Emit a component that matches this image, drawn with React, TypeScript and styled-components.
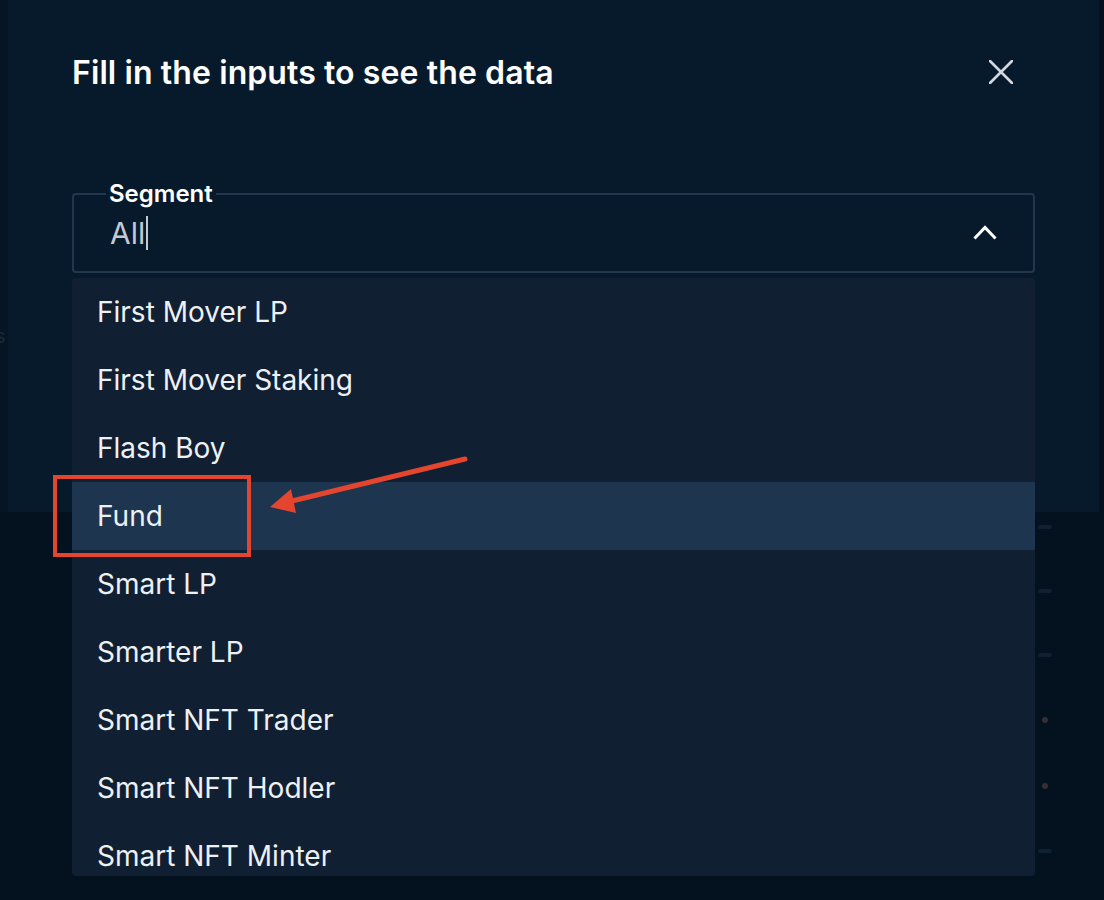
import React from "react";
import styled, { createGlobalStyle } from "styled-components";

const GlobalStyle = createGlobalStyle`
  html, body { margin: 0; padding: 0; background: #04121f; }
  body { font-family: Inter, "Noto Sans", "Liberation Sans", sans-serif; -webkit-font-smoothing: antialiased; }
  * { box-sizing: border-box; }
`;

const Page = styled.div`
  position: relative;
  width: 1104px;
  height: 900px;
  overflow: hidden;
  background: #04121f;
`;

const TopRow = styled.div`
  display: flex;
  height: 512px;
`;

const Gutter = styled.div`
  width: 8px;
  flex: none;
  overflow: hidden;
  background: #051524;
  padding-top: 324px;
`;

const GhostText = styled.span`
  display: block;
  margin-left: -5px;
  font-size: 20px;
  color: #1c2a39;
`;

const Dialog = styled.section`
  position: relative;
  width: 1091px;
  flex: none;
  background: #071a2c;
  padding: 50px 64px 0 64px;
`;

const Header = styled.header`
  display: flex;
  align-items: center;
  justify-content: space-between;
  height: 44px;
`;

const Title = styled.h2`
  margin: 0;
  font-size: 32px;
  font-weight: 600;
  color: #ffffff;
  letter-spacing: 0.1px;
`;

const CloseButton = styled.button`
  width: 44px;
  height: 44px;
  margin-right: 12px;
  display: flex;
  align-items: center;
  justify-content: center;
  border: none;
  background: transparent;
  padding: 0;
  cursor: pointer;
`;

const Field = styled.div`
  position: relative;
  margin-top: 87px;
`;

const Fieldset = styled.fieldset`
  margin: 0;
  border: 2px solid #23364b;
  border-radius: 4px;
  padding: 8px 36px 20px 36px;
  min-width: 0;
`;

const Legend = styled.legend`
  margin-left: -4px;
  padding: 0 3px;
  font-size: 24px;
  line-height: 26px;
  font-weight: 600;
  color: #ffffff;
`;

const InputRow = styled.div`
  display: flex;
  align-items: center;
  justify-content: space-between;
  height: 36px;
`;

const Value = styled.span`
  display: flex;
  align-items: center;
  font-size: 30px;
  line-height: 36px;
  color: #c3cad3;
`;

const Caret = styled.span`
  display: inline-block;
  width: 2px;
  height: 34px;
  margin-left: 1px;
  background: #c3cad3;
`;

const Menu = styled.ul`
  position: absolute;
  top: calc(100% + 5px);
  left: 0;
  right: 0;
  height: 598px;
  margin: 0;
  padding: 0;
  list-style: none;
  overflow: hidden;
  background: #111f33;
  border-radius: 4px;
  z-index: 2;
`;

const Option = styled.li<{ $active?: boolean }>`
  display: flex;
  align-items: center;
  height: 68px;
  padding-left: 25px;
  font-size: 28px;
  color: #eef1f4;
  background: ${(p) => (p.$active ? "#1e3550" : "transparent")};
`;

const Lower = styled.div`
  display: flex;
  justify-content: flex-end;
  padding: 13px 52px 0 0;
`;

const MarkColumn = styled.div`
  display: flex;
  flex-direction: column;
  align-items: center;
  gap: 60px;
`;

const Mark = styled.span<{ $dot?: boolean }>`
  display: block;
  width: ${(p) => (p.$dot ? "6px" : "14px")};
  height: ${(p) => (p.$dot ? "6px" : "4px")};
  border-radius: 3px;
  background: ${(p) => (p.$dot ? "#352f33" : "#102133")};
`;

const Annotation = styled.svg`
  position: absolute;
  left: 0;
  top: 0;
  pointer-events: none;
  z-index: 5;
`;

const options = [
  "First Mover LP",
  "First Mover Staking",
  "Flash Boy",
  "Fund",
  "Smart LP",
  "Smarter LP",
  "Smart NFT Trader",
  "Smart NFT Hodler",
  "Smart NFT Minter",
];

export default function App() {
  return (
    <>
      <GlobalStyle />
      <Page>
        <TopRow>
          <Gutter>
            <GhostText>s</GhostText>
          </Gutter>
          <Dialog>
            <Header>
              <Title>Fill in the inputs to see the data</Title>
              <CloseButton aria-label="Close">
                <svg width="24" height="24" viewBox="0 0 24 24">
                  <path d="M1 1 L23 23 M23 1 L1 23" stroke="#d3d8de" strokeWidth="2.6" strokeLinecap="round" />
                </svg>
              </CloseButton>
            </Header>
            <Field>
              <Fieldset>
                <Legend>Segment</Legend>
                <InputRow>
                  <Value>
                    All
                    <Caret />
                  </Value>
                  <svg width="24" height="16" viewBox="0 0 24 16">
                    <path d="M1.5 13.5 L12 2.5 L22.5 13.5" fill="none" stroke="#ffffff" strokeWidth="3" />
                  </svg>
                </InputRow>
              </Fieldset>
              <Menu>
                {options.map((o) => (
                  <Option key={o} $active={o === "Fund"}>
                    {o}
                  </Option>
                ))}
              </Menu>
            </Field>
          </Dialog>
        </TopRow>
        <Lower>
          <MarkColumn>
            <Mark />
            <Mark />
            <Mark />
            <Mark $dot />
            <Mark $dot />
            <Mark />
          </MarkColumn>
        </Lower>
        <Annotation width="1104" height="900" viewBox="0 0 1104 900">
          <rect x="55" y="477" width="194" height="78" fill="none" stroke="#e4452e" strokeWidth="4" />
          <line x1="465" y1="459" x2="292" y2="501" stroke="#e4452e" strokeWidth="5" strokeLinecap="round" />
          <polygon points="270,507 291,489 296,513" fill="#e4452e" />
        </Annotation>
      </Page>
    </>
  );
}
